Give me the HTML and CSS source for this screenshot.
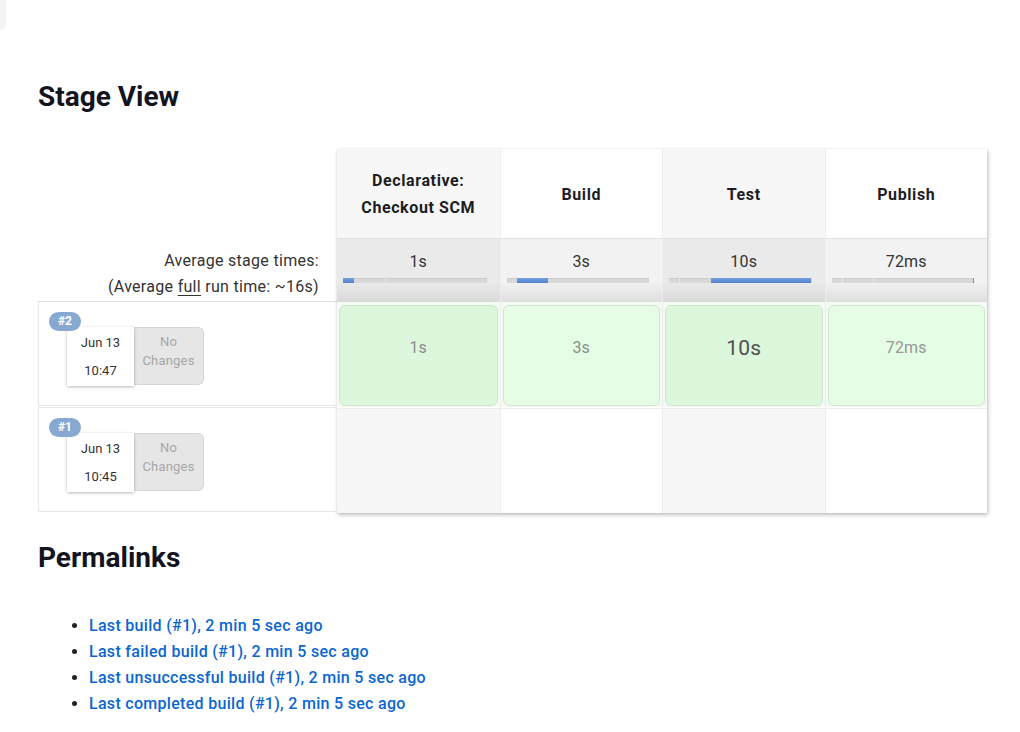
FILE: index.html
```html
<!DOCTYPE html>
<html lang="en">
<head>
<meta charset="utf-8">
<title>Stage View</title>
<link rel="stylesheet" href="styles.css">
</head>
<body>
<div class="corner"></div>
<main class="page">
  <h2 class="title">Stage View</h2>

  <div class="stage-view">
    <div class="labels">
      <div class="label-head"></div>
      <div class="label-avg">
        <div>Average stage times:</div>
        <div>(Average <u>full</u> run time: ~16s)</div>
      </div>
      <div class="build-row">
        <span class="badge">#2</span>
        <div class="date-box"><div>Jun 13</div><div>10:47</div></div>
        <div class="changes">No<br>Changes</div>
      </div>
      <div class="build-row">
        <span class="badge">#1</span>
        <div class="date-box"><div>Jun 13</div><div>10:45</div></div>
        <div class="changes">No<br>Changes</div>
      </div>
    </div>

    <div class="stages">
      <div class="stage-col odd">
        <div class="stage-head">Declarative: Checkout SCM</div>
        <div class="stage-avg">
          <div class="avg-time">1s</div>
          <div class="bar"><span class="tick" style="left:42px"></span><span class="fill" style="left:0;width:11px"></span></div>
        </div>
        <div class="stage-cell"><div class="ok"><span class="t">1s</span></div></div>
        <div class="stage-cell empty"></div>
      </div>
      <div class="stage-col">
        <div class="stage-head">Build</div>
        <div class="stage-avg">
          <div class="avg-time">3s</div>
          <div class="bar"><span class="fill" style="left:10px;width:31px"></span></div>
        </div>
        <div class="stage-cell"><div class="ok"><span class="t">3s</span></div></div>
        <div class="stage-cell empty"></div>
      </div>
      <div class="stage-col odd">
        <div class="stage-head">Test</div>
        <div class="stage-avg">
          <div class="avg-time">10s</div>
          <div class="bar"><span class="tick" style="left:10px"></span><span class="fill" style="left:42px;width:100px"></span></div>
        </div>
        <div class="stage-cell"><div class="ok"><span class="t big">10s</span></div></div>
        <div class="stage-cell empty"></div>
      </div>
      <div class="stage-col">
        <div class="stage-head">Publish</div>
        <div class="stage-avg">
          <div class="avg-time">72ms</div>
          <div class="bar"><span class="tick" style="left:10px"></span><span class="tick" style="left:41px"></span><span class="fill" style="left:141px;width:1px"></span></div>
        </div>
        <div class="stage-cell"><div class="ok"><span class="t light">72ms</span></div></div>
        <div class="stage-cell empty"></div>
      </div>
    </div>
  </div>

  <h2 class="title perma">Permalinks</h2>
  <ul class="links">
    <li><a href="#">Last build (#1), 2 min 5 sec ago</a></li>
    <li><a href="#">Last failed build (#1), 2 min 5 sec ago</a></li>
    <li><a href="#">Last unsuccessful build (#1), 2 min 5 sec ago</a></li>
    <li><a href="#">Last completed build (#1), 2 min 5 sec ago</a></li>
  </ul>
</main>
</body>
</html>
```

FILE: styles.css
```css
* { box-sizing: border-box; }

body {
  margin: 0;
  background: #fff;
  color: #333;
  font-family: Roboto, "Noto Sans", "Liberation Sans", sans-serif;
  font-size: 16px;
}

.corner {
  width: 6px;
  height: 30px;
  background: #f4f4f7;
  border-bottom-right-radius: 8px;
}

.page {
  padding-left: 38px;
}

.title {
  margin: 50px 0 0;
  font-size: 28px;
  line-height: 33px;
  font-weight: 700;
  color: #14141f;
}

.stage-view {
  display: flex;
  margin-top: 36px;
}

.labels {
  width: 299px;
  display: flex;
  flex-direction: column;
}

.label-head { height: 89px; }

.label-avg {
  height: 64px;
  padding: 10px 18px 0 0;
  text-align: right;
  line-height: 26px;
  letter-spacing: 0.3px;
  color: #333;
  border-bottom: 1px solid #dcdcdc;
}

.label-avg u { text-decoration-thickness: 1px; text-underline-offset: 3px; }

.build-row {
  position: relative;
  height: 105px;
  border: 1px solid #e6e6e6;
  border-right: none;
  padding: 25px 0 0 28px;
  display: flex;
  align-items: flex-start;
}

.build-row + .build-row { margin-top: 1px; border-top-color: #e6e6e6; }
.label-avg + .build-row { border-top: none; height: 104px; }

.badge {
  position: absolute;
  left: 10px;
  top: 10px;
  width: 32px;
  height: 19px;
  border-radius: 10px;
  background: #87a9d1;
  color: #fff;
  font-size: 12px;
  font-weight: 700;
  line-height: 19px;
  text-align: center;
  z-index: 2;
}

.date-box {
  width: 67px;
  height: 59px;
  background: #fff;
  box-shadow: 0 1px 3px rgba(0, 0, 0, 0.28);
  padding-top: 2px;
  text-align: center;
  font-size: 13px;
  line-height: 28px;
  color: #333;
  position: relative;
  z-index: 1;
}

.changes {
  width: 70px;
  height: 58px;
  background: #e6e6e6;
  border: 1px solid #d5d5d5;
  border-left: none;
  border-radius: 0 6px 6px 0;
  padding-top: 4px;
  text-align: center;
  font-size: 13px;
  line-height: 19px;
  letter-spacing: 0.2px;
  color: #a6a6a6;
}

.stages {
  display: flex;
  width: 650px;
  box-shadow: 1px 2px 4px rgba(0, 0, 0, 0.25), 0 0 1px rgba(0, 0, 0, 0.12);
  background: #fff;
}

.stage-col {
  width: 162.5px;
  display: flex;
  flex-direction: column;
  border-left: 1px solid #ededed;
}

.stage-col:first-child { border-left: none; }

.stage-head {
  height: 89px;
  display: flex;
  align-items: center;
  justify-content: center;
  text-align: center;
  padding: 1px 8px 0;
  font-weight: 700;
  font-size: 16px;
  line-height: 27px;
  letter-spacing: 0.6px;
  color: #1d1d24;
  background: #fff;
}

.odd .stage-head { background: #f7f7f7; }

.stage-avg {
  height: 64px;
  border-top: 1px solid #e2e2e2;
  padding-top: 10px;
  background: linear-gradient(to bottom, #f2f2f2 0, #f2f2f2 68%, #dedede 100%);
}

.odd .stage-avg {
  background: linear-gradient(to bottom, #eaeaea 0, #eaeaea 68%, #d9d9d9 100%);
}

.avg-time {
  text-align: center;
  line-height: 26px;
  letter-spacing: 0.2px;
  color: #333;
}

.bar {
  position: relative;
  height: 5px;
  margin: 3px 13px 0 6px;
  background: #d8d8d8;
  box-shadow: inset 0 1px 1px rgba(0, 0, 0, 0.06);
}

.tick {
  position: absolute;
  top: 0;
  width: 1px;
  height: 5px;
  background: #e8e8e8;
}

.fill {
  position: absolute;
  top: 0;
  height: 5px;
  background: linear-gradient(to bottom, #74a0e0, #4f82cc);
}

.stage-cell {
  height: 105px;
  padding: 3px 2px 1px 2px;
  background: #f3fbf3;
}

.stage-cell.empty {
  margin-top: 1px;
  padding: 0;
  background: #fff;
  border-top: 1px solid #ececec;
}

.odd .stage-cell.empty { background: #f7f7f7; }

.ok {
  height: 100%;
  border: 1px solid #d3e3d3;
  border-radius: 6px;
  background: #e4fde4;
  padding-top: 29px;
  text-align: center;
}

.odd .ok { background: #dcf7dc; }

.t {
  display: inline-block;
  font-size: 16px;
  line-height: 26px;
  letter-spacing: 0.2px;
  color: #8c8c8c;
}

.t.big { font-size: 21px; color: #505050; }
.t.light { color: #979797; }

.perma { margin-top: 28px; }

.links {
  margin: 39px 0 0;
  padding-left: 51px;
  line-height: 26px;
  color: #222;
}

.links a {
  color: #0b66d0;
  text-decoration: none;
  font-weight: 500;
  letter-spacing: 0.3px;
}
```
